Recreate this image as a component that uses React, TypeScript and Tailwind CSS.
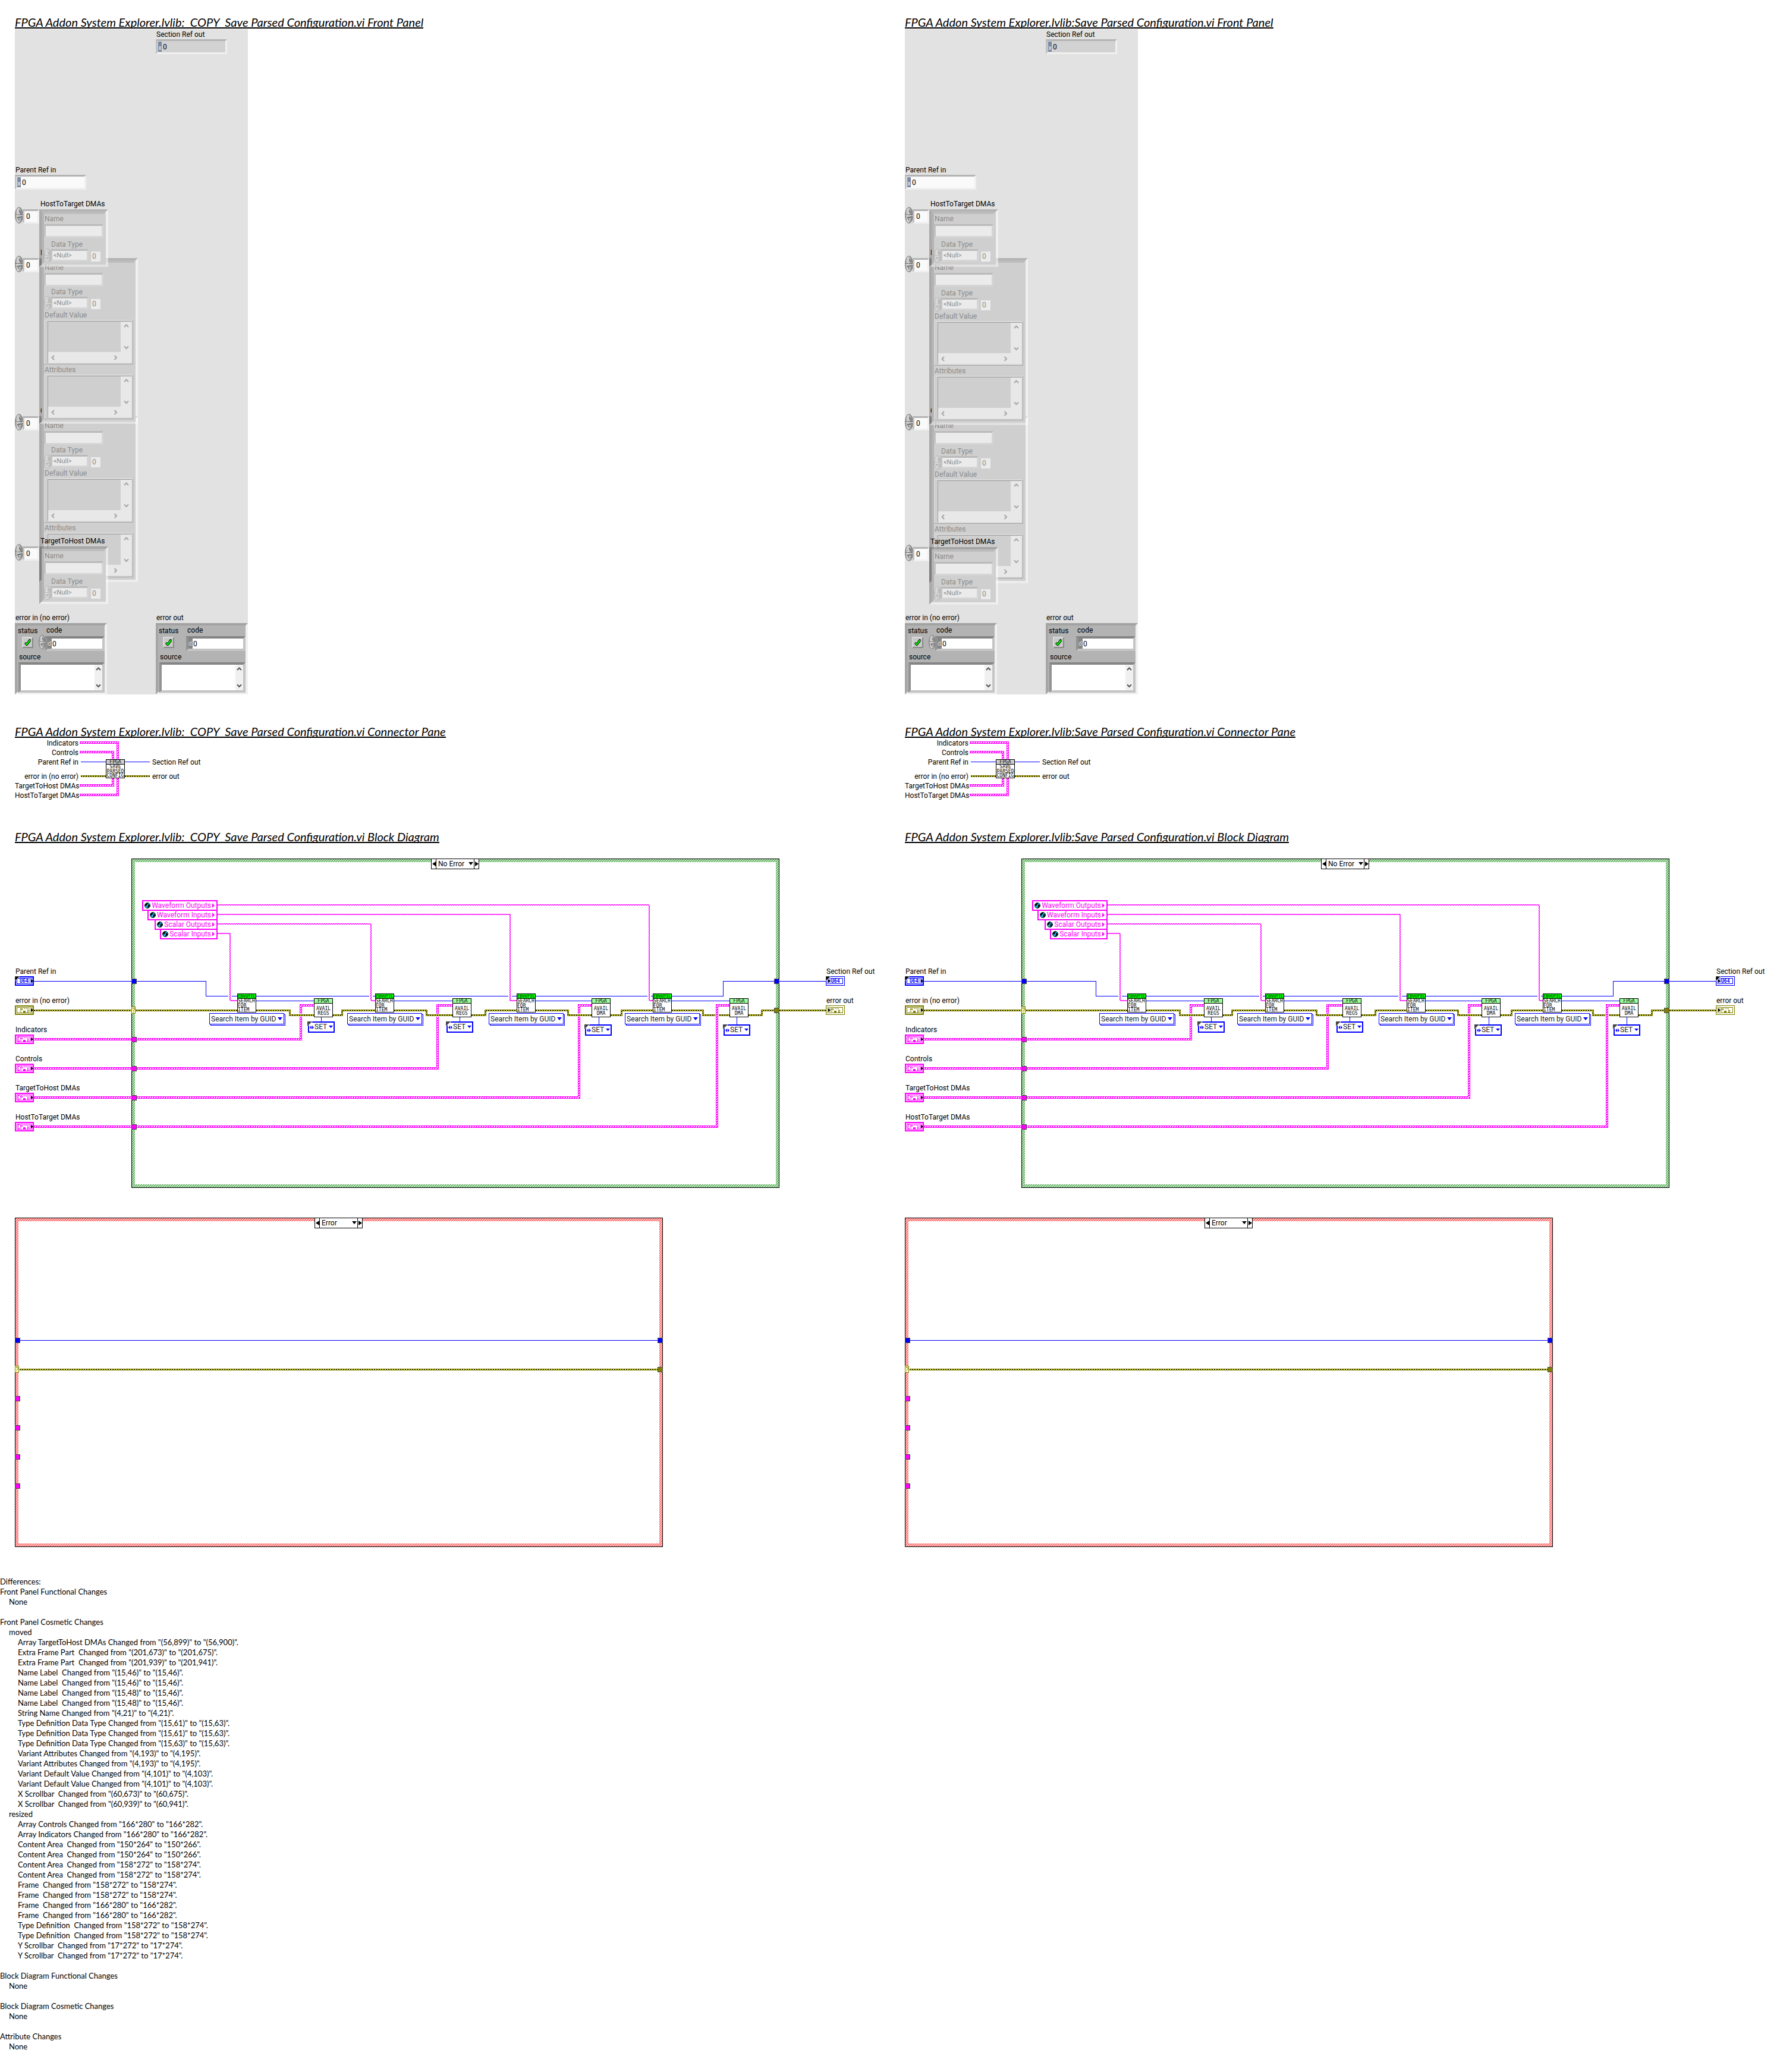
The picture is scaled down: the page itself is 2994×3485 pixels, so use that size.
import React, { useId } from "react";

const BEVEL = "border-3 border-t-[#b4b4b4] border-l-[#c0c0c0] border-r-[#f0f0f0] border-b-[#f0f0f0]";
const BEVEL_OFF = "border-3 border-t-[#bababa] border-l-[#c2c2c2] border-r-[#d5d5d5] border-b-[#d5d5d5]";
const BEVEL_DARK = "border-4 border-t-[#858585] border-l-[#929292] border-r-[#c4c4c4] border-b-[#c4c4c4]";

function Heading({ children }: { children: React.ReactNode }) {
  return (
    <h2 className="h-[23px] w-fit overflow-hidden whitespace-pre border-b-2 border-black font-['Lato',sans-serif] text-[20px] leading-6 italic">
      {children}
    </h2>
  );
}

/* ---------- Front panel ---------- */

function Spinner({ off = false, small = false, className = "" }: { off?: boolean; small?: boolean; className?: string }) {
  const gid = off ? "spinnerOff" : "spinnerOn";
  const edge = off ? "#b2b2b2" : "#767676";
  const mark = off ? "#9c9c9c" : "#3c3c3c";
  return (
    <button type="button" aria-label="Increment or decrement" className={`block shrink-0 ${small ? "h-6 w-3" : "h-7 w-[14px]"} ${className}`}>
      <svg viewBox="0 0 14 28" preserveAspectRatio="none" className="block h-full w-full">
        <defs>
          <linearGradient id={gid} x1="0" x2="1" y1="0" y2="0">
            <stop offset="0" stopColor={off ? "#c9c9c9" : "#9a9a9a"} />
            <stop offset=".35" stopColor={off ? "#dedede" : "#dcdcdc"} />
            <stop offset="1" stopColor={off ? "#b4b4b4" : "#707070"} />
          </linearGradient>
        </defs>
        <ellipse cx="7" cy="14" rx="6.4" ry="13.4" fill={`url(#${gid})`} stroke={edge} />
        <path d="M1 13.5h12" stroke={off ? "#aaa" : "#666"} />
        <path d="M1 14.5h12" stroke="#e8e8e8" />
        <path d="M4.5 10.5L7 5.5l2.500 5" fill="none" stroke={mark} />
        <path d="M4.500 10.500L7 5.500" fill="none" stroke="#f4f4f4" />
        <path d="M4.500 17.500h5L7 22.500z" fill="none" stroke={mark} />
        <path d="M9.500 18L7 22.500" fill="none" stroke="#f4f4f4" />
      </svg>
    </button>
  );
}

function Chevron({ dir, color }: { dir: "up" | "down" | "left" | "right"; color: string }) {
  const d = { up: "M1 6l3.500-3.500L8 6", down: "M1 2.500l3.500 3.500L8 2.500", left: "M6 1L2.500 4.500 6 8", right: "M2.500 1L6 4.500 2.500 8" }[dir];
  return (
    <svg viewBox="0 0 9 9" className="block size-[9px]">
      <path d={d} fill="none" stroke={color} strokeWidth="2" />
    </svg>
  );
}

function RefField({ label, readOnly = false, className }: { label: string; readOnly?: boolean; className: string }) {
  const id = useId();
  return (
    <div className={`absolute w-[120px] ${className}`}>
      <label htmlFor={id} className="block h-4 pl-px">{label}</label>
      <div className={`flex h-[25px] p-px ${BEVEL} ${readOnly ? "bg-[#d2d2d2]" : "bg-[#fafafa]"}`}>
        <span className="flex w-[6px] items-end justify-center bg-[#7888a5] text-[10px] leading-3 text-white">x</span>
        <input id={id} readOnly={readOnly} defaultValue="0" className="w-20 bg-transparent pl-[2px] outline-none" />
      </div>
    </div>
  );
}

function VariantBox({ label }: { label: string }) {
  return (
    <div>
      <div className="h-4 pl-px">{label}</div>
      <div className="h-[75px] w-[150px] border border-t-[#e0e0e0] border-l-[#e0e0e0] border-r-[#a8a8a8] border-b-[#a8a8a8] py-px pr-px pl-[5px]">
        <div className="grid h-full grid-cols-[1fr_18px] grid-rows-[1fr_18px] border border-t-[#a0a0a0] border-l-[#a0a0a0] border-r-[#e0e0e0] border-b-[#e0e0e0]">
          <div className="bg-[#cfcfcf]" />
          <div className="flex flex-col items-center justify-between bg-[#e8e8e8] py-[3px]">
            <Chevron dir="up" color="#a6a6a6" />
            <Chevron dir="down" color="#a6a6a6" />
          </div>
          <div className="flex items-center justify-between bg-[#e8e8e8] px-1">
            <Chevron dir="left" color="#a6a6a6" />
            <Chevron dir="right" color="#a6a6a6" />
          </div>
          <div className="bg-[#e8e8e8]" />
        </div>
      </div>
    </div>
  );
}

function ArrayControl({ label, variants = false, shifted = true, clipped = false, className }: { label: string; variants?: boolean; shifted?: boolean; clipped?: boolean; className: string }) {
  const id = useId();
  return (
    <div className={`absolute left-0 ${className}`}>
      <label htmlFor={id + "i"} className={`mb-px ml-[43px] block h-4 whitespace-nowrap ${clipped ? "w-1 overflow-hidden" : "w-28"}`}>{label}</label>
      <div className="flex items-start">
        <Spinner className="-mt-1" />
        <div className={`-ml-px h-6 w-7 bg-[#fafafa] ${BEVEL}`}>
          <input id={id + "i"} defaultValue="0" className="block h-full w-full bg-transparent pl-[3px] outline-none" />
        </div>
        <div className={`border-4 border-t-black/20 border-l-black/25 border-r-white/50 border-b-white/40 ${variants ? "w-[166px]" : "w-[116px]"}`}>
          <div className="border-4 border-t-[#bdbdbd] border-l-[#b4b4b4] border-r-[#cfcfcf] border-b-[#cfcfcf] bg-[#cfcfcf] text-[#8b8b8b]">
            <label htmlFor={id + "n"} className="block h-4 pl-px">Name</label>
            <div className={`mt-px h-[23px] w-[100px] bg-[#ebebeb] ${BEVEL_OFF}`}>
              <input id={id + "n"} disabled className="block h-full w-full" />
            </div>
            <label htmlFor={id + "d"} className={`block h-4 pl-3 ${shifted ? "mt-[3px]" : "mt-px"}`}>Data Type</label>
            <div className="flex h-[21px] items-start">
              <Spinner off small className="-mt-px" />
              <div className={`-ml-px h-[21px] w-16 bg-[#ebebeb] ${BEVEL_OFF}`}>
                <select id={id + "d"} disabled className="block h-full w-full appearance-none pl-[2px] text-[11px] leading-[15px]">
                  <option>&lt;Null&gt;</option>
                </select>
              </div>
              <output className="mt-1 ml-1 h-[17px] w-4 bg-[#ebebeb] pl-[2px] leading-[17px]">0</output>
            </div>
            {variants ? (
              <div className="space-y-px pt-[2px]">
                <VariantBox label="Default Value" />
                <VariantBox label="Attributes" />
              </div>
            ) : (
              <div className="h-px" />
            )}
          </div>
        </div>
      </div>
    </div>
  );
}

function ErrorCluster({ label, indicator = false, className }: { label: string; indicator?: boolean; className: string }) {
  const id = useId();
  return (
    <fieldset className={`absolute top-[982px] w-[155px] ${className}`}>
      <legend className="mb-px h-4 pl-px">{label}</legend>
      <div className="relative h-[120px] border-4 border-t-[#a2a2a2] border-l-[#a6a6a6] border-r-[#f0f0f0] border-b-[#f0f0f0] bg-[#b3b3b3]">
        <div className="flex">
          <div className="w-9 pl-px">
            <label htmlFor={id + "s"} className="mt-px block h-4">status</label>
            <div className="relative mt-[2px] ml-[7px] h-[19px] w-[19px] border-2 border-t-[#d8d8d8] border-l-[#d8d8d8] border-r-[#888] border-b-[#888] bg-[#c9c9c9]">
              <input id={id + "s"} type="checkbox" defaultChecked className="absolute inset-0 appearance-none" />
              <svg viewBox="0 0 15 15" className="pointer-events-none block size-[15px]">
                <path d="M2.500 9l2-1.500 1.500 1.500 4-6.500h2v3.500l-5 6.500H5z" fill="#00f000" stroke="#000" />
              </svg>
            </div>
          </div>
          <div>
            <label htmlFor={id + "c"} className="block h-4 pl-[13px]">code</label>
            <div className="flex h-[25px] items-start">
              {indicator ? <span className="w-3" /> : <Spinner small />}
              <div className={`mt-[2px] -ml-px flex h-[25px] w-[100px] bg-white ${BEVEL_DARK}`}>
                <span className="w-[7px] bg-[#858585] text-[10px] leading-[17px] text-[#ddd]">d</span>
                <input id={id + "c"} readOnly={indicator} defaultValue="0" className="w-20 pl-px outline-none" />
              </div>
            </div>
          </div>
        </div>
        <label htmlFor={id + "t"} className="mt-1 block h-4 pl-[3px]">source</label>
        <div className={`mt-px ml-[2px] flex h-[51px] w-[145px] bg-white ${BEVEL_DARK}`}>
          <textarea id={id + "t"} readOnly={indicator} className="block min-w-0 grow resize-none outline-none" />
          <div className="flex w-4 flex-col items-center justify-between bg-[#f0f0f0] py-[3px]">
            <Chevron dir="up" color="#555" />
            <Chevron dir="down" color="#555" />
          </div>
        </div>
      </div>
    </fieldset>
  );
}

function FrontPanel({ revised }: { revised: boolean }) {
  return (
    <div className="relative mt-px h-[1119px] w-[392px] overflow-hidden bg-[#e2e2e2]">
      <RefField label="Section Ref out" readOnly className="top-px left-[237px]" />
      <RefField label="Parent Ref in" className="top-[229px] left-0" />
      <ArrayControl label="Controls" variants clipped shifted={revised} className="top-[634px]" />
      <ArrayControl label="Indicators" variants clipped shifted={revised} className="top-[368px]" />
      <ArrayControl label="HostToTarget DMAs" className="top-[286px]" />
      <ArrayControl label="TargetToHost DMAs" className={revised ? "top-[854px]" : "top-[853px]"} />
      <ErrorCluster label="error in (no error)" className="left-0" />
      <ErrorCluster label="error out" indicator className="left-[237px]" />
    </div>
  );
}

/* ---------- Wires ---------- */

function Patterns() {
  return (
    <defs>
      <pattern id="clusterWire" width="4" height="4" patternUnits="userSpaceOnUse">
        <rect width="4" height="4" fill="#fff" />
        <path d="M0 3h1v1h-1zM1 2h1v1h-1zM2 1h1v1h-1zM3 0h1v1h-1z" fill="#f0f" />
        <path d="M1 3h1v1h-1zM2 2h1v1h-1zM3 1h1v1h-1zM0 0h1v1h-1z" fill="#f0f" />
      </pattern>
    </defs>
  );
}

function ClusterWire({ d }: { d: string }) {
  return (
    <g fill="none">
      <path d={d} stroke="#f0f" strokeWidth="4" />
      <path d={d} stroke="url(#clusterWire)" strokeWidth="2" />
    </g>
  );
}

function ErrorWire({ d }: { d: string }) {
  return (
    <g fill="none">
      <path d={d} stroke="#808000" strokeWidth="3" />
      <path d={d} stroke="#ffff40" strokeWidth="1" />
      <path d={d} stroke="#000" strokeWidth="1" strokeDasharray="2 2" />
    </g>
  );
}

function StringWire({ from, y, x, end }: { from: number; y: number; x: number; end: number }) {
  return (
    <g fill="none" stroke="#f0f">
      <path d={`M${x - 3} 1675.500H${x + 3}`} stroke="#fff" strokeWidth="3" />
      <path d={`M${from} ${y + 0.5}H${x + 0.5}V1683.500H${end}`} strokeDasharray="3 1" />
      <path d={`M${from} ${y - 0.5}H${x - 0.5}V1682.500H${end}`} strokeDasharray="3 1" strokeDashoffset="2" />
    </g>
  );
}

function IntWire({ d }: { d: string }) {
  return <path d={d} fill="none" stroke="#0000ff" strokeWidth="1" shapeRendering="crispEdges" />;
}

/* ---------- Connector pane ---------- */

const ICON_TEXT = "font-['DejaVu_Sans_Mono',monospace] text-[8px] leading-[8px]";

function ConnectorPane() {
  const left = ["Indicators", "Controls", "Parent Ref in", "", "error in (no error)", "TargetToHost DMAs", "HostToTarget DMAs"];
  return (
    <div className="relative mt-px h-[103px] w-[360px]">
      <ul className="w-[107px] text-right whitespace-nowrap">
        {left.map((t, i) => (
          <li key={i} className={t ? "h-4" : "h-2"}>{t}</li>
        ))}
      </ul>
      <svg viewBox="134 1242 120 103" className="absolute top-0 left-[109px] h-[103px] w-[120px]">
        <Patterns />
        <ClusterWire d="M134 1249H198V1277" />
        <ClusterWire d="M134 1265H190V1277" />
        <ClusterWire d="M134 1321H190V1309" />
        <ClusterWire d="M134 1337H198V1309" />
        <IntWire d="M136 1281.500H178M210 1281.500H252" />
        <ErrorWire d="M136 1305.500H178M210 1305.500H252" />
      </svg>
      <div className={`absolute top-[35px] left-[153px] h-8 w-8 border border-black bg-white text-center ${ICON_TEXT}`}>
        <div className="h-2 border-b border-black bg-[#ccc]">FPGA</div>
        <div>SAVE</div>
        <div>PARSED</div>
        <div className="leading-[6px]">CONFIG</div>
      </div>
      <div className="absolute top-8 left-[231px]">Section Ref out</div>
      <div className="absolute top-14 left-[231px]">error out</div>
    </div>
  );
}

/* ---------- Block diagram ---------- */

const HATCH_GREEN = "bg-[linear-gradient(135deg,#b0ffb0_35%,#7c9c7c_35%_50%,#b0ffb0_50%_85%,#7c9c7c_85%)]";
const HATCH_RED = "bg-[linear-gradient(135deg,#ff7878_40%,#ffffff_40%_50%,#ff7878_50%_90%,#ffffff_90%)]";

function CaseFrame({ name, error = false, className = "" }: { name: string; error?: boolean; className?: string }) {
  return (
    <div className={`relative h-[554px] w-[1090px] border border-black bg-[length:4px_4px] p-[5px] ${error ? HATCH_RED : HATCH_GREEN} ${className}`}>
      <div className="h-full bg-white" />
      <div className="absolute -top-px left-[503px] flex h-[18px] w-[81px] items-stretch border border-black bg-white">
        <button type="button" aria-label="Previous case" className="flex w-2 items-center justify-center border-r border-black">
          <svg viewBox="0 0 6 8" className="h-2 w-[6px]"><path d="M6 0v8L0 4z" /></svg>
        </button>
        <div className="relative grow">
          <select aria-label="Case" className="block h-full w-full appearance-none pl-[3px] outline-none">
            <option>{name}</option>
          </select>
          <svg viewBox="0 0 8 5" className="pointer-events-none absolute top-[5px] right-px h-[5px] w-2"><path d="M0 0h8L4 5z" /></svg>
        </div>
        <button type="button" aria-label="Next case" className="flex w-2 items-center justify-center border-l border-black">
          <svg viewBox="0 0 6 8" className="h-2 w-[6px]"><path d="M0 0v8l6-4z" /></svg>
        </button>
      </div>
    </div>
  );
}

function Tunnels({ left, top, bool, pinks, right }: { left: number; top: number; bool: number; pinks: number[]; right: number }) {
  return (
    <g stroke="#4a4a4a">
      <rect x={left + 0.5} y={top + 0.5} width="8" height="8" fill="#00f" />
      <rect x={right + 0.5} y={top + 0.5} width="8" height="8" fill="#00f" />
      <rect x={right + 0.5} y={top + 49.5} width="8" height="8" fill="#808000" />
      {pinks.map((y) => (
        <rect key={y} x={left + 0.5} y={y + 0.5} width="8" height="8" fill="#f0f" />
      ))}
      <rect x={left + 0.5} y={bool + 0.5} width="6" height="11" fill="#ffffc8" stroke="#808000" />
      <path d={`M${left + 2.5} ${bool + 4}v-1.500h2.500v3l-1.500 1v1.500M${left + 3.5} ${bool + 9}v1`} fill="none" stroke="#808000" />
    </g>
  );
}

type Kind = "u64" | "error" | "array";

function Terminal({ kind, out = false }: { kind: Kind; out?: boolean }) {
  const color = { u64: "#0000ff", error: "#808000", array: "#ff00ff" }[kind];
  const tint = { u64: "#a0a0ff", error: "#d0d0a0", array: "#ffa0ff" }[kind];
  return (
    <div className="relative h-4 w-8">
      <svg viewBox="0 0 32 16" className="block h-4 w-8">
        <rect x={out ? 0.5 : 1} y={out ? 0.5 : 1} width={out ? 31 : 30} height={out ? 15 : 14} fill="#fff" stroke={color} strokeWidth={out ? 1 : 2} />
        <rect x="3.500" y="3.500" width="25" height="9" fill="#fff" stroke={color} />
        {kind !== "u64" && (
          <g fill="none" stroke={color}>
            {kind === "array" && <path d="M8 4.500H5.500v7H8M24 4.500h2.500v7H24" />}
            <rect x="9.500" y="5.500" width="3" height="2" />
            <path d="M15 5.500h2M18 5.500h2M8 10h3M21.500 5v2" />
            <path d="M14 9h4v3h-4z" fill={color} stroke="none" />
            <rect x="21.500" y="8.500" width="2" height="3" />
          </g>
        )}
        <rect x={out ? 1 : 22} y="2" width="8" height="12" fill={tint} opacity=".7" />
        <path d={out ? "M4 5v6l4-3z" : "M27 5v6l4-3z"} fill="#000" />
        {kind === "u64" && <path d="M0 0h8L0 8z" fill="#000" stroke="#fff" strokeWidth=".5" />}
      </svg>
      {kind === "u64" && (
        <span className={`absolute inset-0 flex items-center pt-px font-bold ${ICON_TEXT} text-[#0000ff] ${out ? "pl-[9px]" : "pl-2"}`}>U64</span>
      )}
    </div>
  );
}

function Local({ name }: { name: string }) {
  return (
    <li className="-mb-[2px] flex h-[18px] items-center border-2 border-[#ff00ff] bg-white pr-[3px] pl-[2px] whitespace-nowrap text-[#ff00ff]">
      <svg viewBox="0 0 10 10" className="mr-[2px] size-[10px]">
        <circle cx="5" cy="5" r="4.500" fill="#20b8e8" stroke="#000" />
        <path d="M1.500 2.500L4.500 1 6 2 4.500 3.500 3 6 1 5zM6 4l2-1 1 3-2.500 3L5 8l1-2z" fill="#000" />
      </svg>
      <span className="leading-[14px]">{name}</span>
      <svg viewBox="0 0 4 8" className="ml-[2px] h-2 w-1"><path d="M0 0v8l4-4z" fill="#f0f" /></svg>
    </li>
  );
}

type Step = { search: number; node: number; last: string; drop: number; sel: number };

const STEPS: Step[] = [
  { search: 399, node: 528, last: "REGS", drop: 1718, sel: 517 },
  { search: 631, node: 761, last: "REGS", drop: 1718, sel: 750 },
  { search: 869, node: 995, last: "DMA", drop: 1723, sel: 983 },
  { search: 1098, node: 1227, last: "DMA", drop: 1723, sel: 1216 },
];

const ORIGIN_X = 25;
const ORIGIN_Y = 1444;

function at(x: number, y: number): React.CSSProperties {
  return { left: x - ORIGIN_X, top: y - ORIGIN_Y };
}

function StepNodes({ step }: { step: Step }) {
  return (
    <>
      <div style={at(step.search, 1671)} className={`absolute h-8 w-8 overflow-hidden border border-black bg-white ${ICON_TEXT}`}>
        <div className="h-2 border-b border-black bg-[#00ff00] text-center text-[7px]">CDVUTIL</div>
        <div>SEARCH</div>
        <div>FOR</div>
        <div className="leading-[6px]">ITEM</div>
      </div>
      <div style={at(step.search - 47, 1704)} className="absolute h-[21px] w-32">
        <div className="absolute top-[2px] left-[2px] h-[19px] w-[126px] border border-[#0000ff] bg-white" />
        <div className="relative h-[19px] w-[126px] border border-[#0000ff] bg-white">
          <select aria-label="Search mode" className="block h-full w-full appearance-none pl-[2px] text-[#222] outline-none">
            <option>Search Item by GUID</option>
          </select>
          <svg viewBox="0 0 8 5" className="pointer-events-none absolute top-[6px] right-[2px] h-[5px] w-2"><path d="M0 0h8L4 5z" fill="#00f" /></svg>
        </div>
      </div>
      <div style={at(step.node, 1679)} className={`absolute h-8 w-8 border border-black bg-white text-center ${ICON_TEXT}`}>
        <div className="h-2 border-b border-black bg-[#99ff99]">FPGA</div>
        <div className="pt-[5px]">AVAIL</div>
        <div>{step.last}</div>
      </div>
      <div style={at(step.sel, step.drop)} className="absolute ml-px h-[19px] w-[45px] border-2 border-[#0000ff] bg-white">
        <svg viewBox="0 0 9 9" className="absolute -top-[2px] -left-[3px] size-[9px]"><path d="M0 0h9L0 9z" fill="#fff" /><path d="M0 0h8L0 8z" fill="#444" /></svg>
        <svg viewBox="0 0 7 6" className="absolute top-[5px] left-px h-[6px] w-[7px]"><path d="M3 0v6L0 3zM4 0v6l3-3z" fill="#00f" /></svg>
        <select aria-label="Mode" className="block h-full w-full appearance-none pl-[9px] leading-[15px] text-[#222] outline-none">
          <option>SET</option>
        </select>
        <svg viewBox="0 0 7 4" className="pointer-events-none absolute top-[5px] right-px h-1 w-[7px]"><path d="M0 0h7L3.500 4z" fill="#00f" /></svg>
      </div>
    </>
  );
}

function NoErrorCase() {
  const inputs: { label: string; kind: Kind }[] = [
    { label: "Parent Ref in", kind: "u64" },
    { label: "error in (no error)", kind: "error" },
    { label: "Indicators", kind: "array" },
    { label: "Controls", kind: "array" },
    { label: "TargetToHost DMAs", kind: "array" },
    { label: "HostToTarget DMAs", kind: "array" },
  ];
  return (
    <div className="relative mt-[26px] h-[554px]">
      <CaseFrame name="No Error" className="ml-[196px]" />
      <svg viewBox="25 1444 1400 554" className="absolute top-0 left-0 h-[554px] w-[1400px]">
        <Patterns />
        <IntWire d="M57 1650.500H346.500V1675.500H1216.500V1650.500H1389" />
        <ClusterWire d="M57 1748H506V1691H528" />
        <ClusterWire d="M57 1797H736V1691H761" />
        <ClusterWire d="M57 1846H974V1691H995" />
        <path d="M502 1707.500H510M732 1707.500H740M970 1707.500H978" stroke="#fff" strokeWidth="5" />
        <ErrorWire d="M57 1699.500H399M431 1699.500H487.500V1707.500H528M560 1707.500H575.500V1699.500H631M663 1699.500H717.500V1707.500H761M793 1707.500H816.500V1699.500H869M901 1699.500H955.500V1707.500H995M1027 1707.500H1045.500V1699.500H1098M1130 1699.500H1182.500V1707.500H1227M1259 1707.500H1281.500V1699.500H1389" />
        <path d="M1206 1703V1712" stroke="#fff" strokeWidth="6" />
        <ClusterWire d="M57 1895H1206V1691H1227" />
        {STEPS.map((s) => (
          <IntWire key={s.node} d={`M${s.search + 32} 1683.500H${s.node}M${s.node + 12.5} 1711V${s.drop}`} />
        ))}
        <StringWire from={366} y={1522} x={1092} end={1098} />
        <StringWire from={366} y={1538} x={858} end={869} />
        <StringWire from={366} y={1554} x={624} end={631} />
        <StringWire from={366} y={1570} x={387} end={399} />
        <Tunnels left={221} top={1646} bool={1693} pinks={[1744, 1793, 1842, 1891]} right={1302} />
      </svg>
      <ul className="absolute top-[182px] left-0 space-y-[17px]">
        {inputs.map((t) => (
          <li key={t.label} className="h-8 whitespace-nowrap">
            <div className="h-4 pl-px">{t.label}</div>
            <Terminal kind={t.kind} />
          </li>
        ))}
      </ul>
      <ul className="absolute top-[182px] left-[1364px] space-y-[17px] whitespace-nowrap">
        <li className="h-8"><div className="h-4 pl-px">Section Ref out</div><Terminal kind="u64" out /></li>
        <li className="h-8"><div className="h-4 pl-px">error out</div><Terminal kind="error" out /></li>
      </ul>
      <ul className="absolute top-[70px] left-[213px] flex w-32 flex-col items-end">
        {["Waveform Outputs", "Waveform Inputs", "Scalar Outputs", "Scalar Inputs"].map((n) => (
          <Local key={n} name={n} />
        ))}
      </ul>
      {STEPS.map((s) => (
        <StepNodes key={s.node} step={s} />
      ))}
    </div>
  );
}

function ErrorCase() {
  return (
    <div className="relative mt-[50px] h-[554px]">
      <CaseFrame name="Error" error />
      <svg viewBox="25 2048 1090 554" className="absolute top-0 left-0 h-[554px] w-[1090px]">
        <IntWire d="M34 2254.500H1106" />
        <ErrorWire d="M33 2303.500H1106" />
        <Tunnels left={25} top={2250} bool={2297} pinks={[2348, 2397, 2446, 2495]} right={1106} />
      </svg>
    </div>
  );
}

function ViColumn({ vi, revised = false }: { vi: string; revised?: boolean }) {
  return (
    <section className="min-w-0 pl-[25px]">
      <Heading>{vi} Front Panel</Heading>
      <FrontPanel revised={revised} />
      <div className="h-[50px]" />
      <Heading>{vi} Connector Pane</Heading>
      <ConnectorPane />
      <div className="h-[50px]" />
      <Heading>{vi} Block Diagram</Heading>
      <NoErrorCase />
      <ErrorCase />
    </section>
  );
}

/* ---------- Difference report ---------- */

const MOVED: [string, string, string][] = [
  ["Array TargetToHost DMAs", "(56,899)", "(56,900)"],
  ["Extra Frame Part ", "(201,673)", "(201,675)"],
  ["Extra Frame Part ", "(201,939)", "(201,941)"],
  ["Name Label ", "(15,46)", "(15,46)"],
  ["Name Label ", "(15,46)", "(15,46)"],
  ["Name Label ", "(15,48)", "(15,46)"],
  ["Name Label ", "(15,48)", "(15,46)"],
  ["String Name", "(4,21)", "(4,21)"],
  ["Type Definition Data Type", "(15,61)", "(15,63)"],
  ["Type Definition Data Type", "(15,61)", "(15,63)"],
  ["Type Definition Data Type", "(15,63)", "(15,63)"],
  ["Variant Attributes", "(4,193)", "(4,195)"],
  ["Variant Attributes", "(4,193)", "(4,195)"],
  ["Variant Default Value", "(4,101)", "(4,103)"],
  ["Variant Default Value", "(4,101)", "(4,103)"],
  ["X Scrollbar ", "(60,673)", "(60,675)"],
  ["X Scrollbar ", "(60,939)", "(60,941)"],
];

const RESIZED: [string, string, string][] = [
  ["Array Controls", "166*280", "166*282"],
  ["Array Indicators", "166*280", "166*282"],
  ["Content Area ", "150*264", "150*266"],
  ["Content Area ", "150*264", "150*266"],
  ["Content Area ", "158*272", "158*274"],
  ["Content Area ", "158*272", "158*274"],
  ["Frame ", "158*272", "158*274"],
  ["Frame ", "158*272", "158*274"],
  ["Frame ", "166*280", "166*282"],
  ["Frame ", "166*280", "166*282"],
  ["Type Definition ", "158*272", "158*274"],
  ["Type Definition ", "158*272", "158*274"],
  ["Y Scrollbar ", "17*272", "17*274"],
  ["Y Scrollbar ", "17*272", "17*274"],
];

function Changes({ title, rows }: { title: string; rows: [string, string, string][] }) {
  return (
    <div className="pl-[15px]">
      <h4>{title}</h4>
      <ul className="pl-[15px] whitespace-pre">
        {rows.map(([what, a, b], i) => (
          <li key={i}>{`${what} Changed from "${a}" to "${b}".`}</li>
        ))}
      </ul>
    </div>
  );
}

function NoChanges({ title }: { title: string }) {
  return (
    <div className="mb-[17px]">
      <h3>{title}</h3>
      <p className="pl-[15px]">None</p>
    </div>
  );
}

function Differences() {
  return (
    <section className="mt-[50px] font-['Lato',sans-serif] text-[13px] leading-[17px]">
      <h2>Differences:</h2>
      <NoChanges title="Front Panel Functional Changes" />
      <div className="mb-[17px]">
        <h3>Front Panel Cosmetic Changes</h3>
        <Changes title="moved" rows={MOVED} />
        <Changes title="resized" rows={RESIZED} />
      </div>
      <NoChanges title="Block Diagram Functional Changes" />
      <NoChanges title="Block Diagram Cosmetic Changes" />
      <NoChanges title="Attribute Changes" />
    </section>
  );
}

export default function App() {
  return (
    <main className="overflow-x-hidden bg-white pt-[25px] font-['Roboto','Liberation_Sans',sans-serif] text-xs leading-4 text-black">
      <div className="grid grid-cols-2">
        <ViColumn vi="FPGA Addon System Explorer.lvlib:  COPY  Save Parsed Configuration.vi" />
        <ViColumn vi="FPGA Addon System Explorer.lvlib:Save Parsed Configuration.vi" revised />
      </div>
      <Differences />
    </main>
  );
}
